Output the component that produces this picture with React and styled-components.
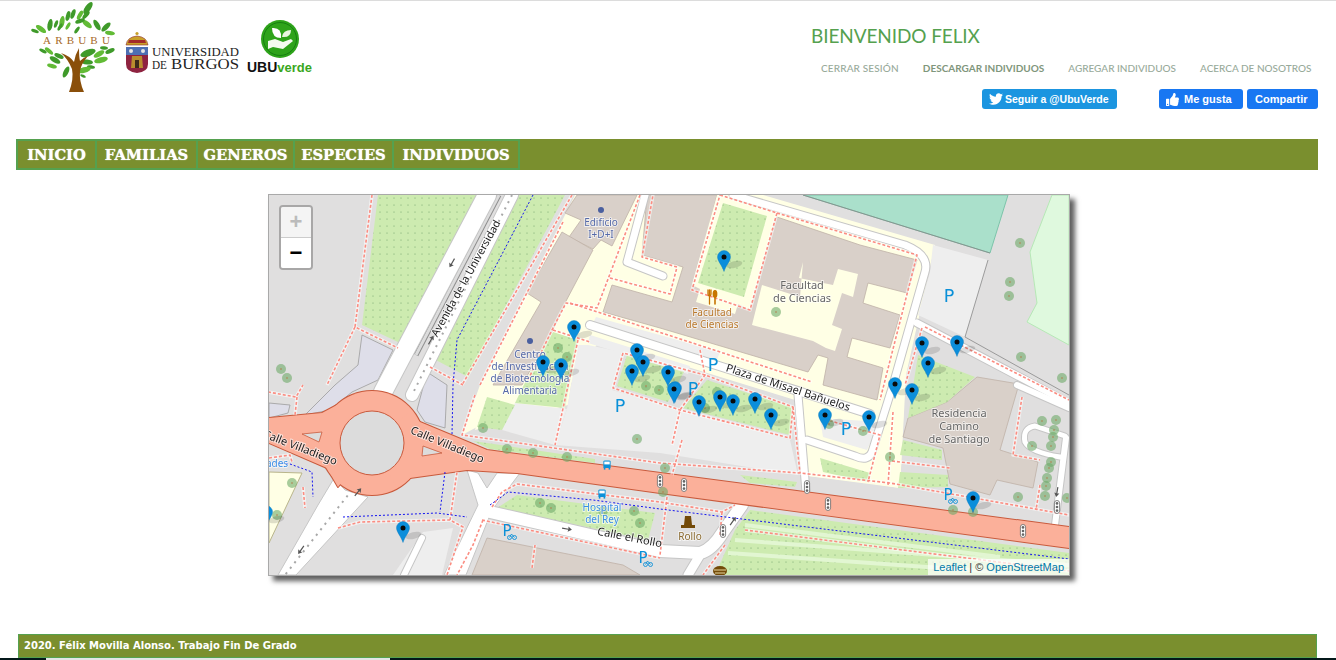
import React from "react";
import styled, { createGlobalStyle } from "styled-components";
import { FaTwitter, FaThumbsUp } from "react-icons/fa";

const OLIVE = "#7a8f2e";
const GREEN = "#55a14f";

const GlobalStyle = createGlobalStyle`
  html, body {
    margin: 0;
    padding: 0;
    height: 660px;
    overflow: hidden;
    background: #fff;
  }
`;

const Page = styled.div`
  height: 660px;
  display: flex;
  flex-direction: column;
  border-top: 1px solid #dcdcdc;
  box-sizing: border-box;
  overflow: hidden;
`;

const Header = styled.header`
  height: 138px;
  flex: none;
  display: flex;
  justify-content: space-between;
  padding-right: 18px;
`;

const Logos = styled.div`
  display: flex;
  align-items: flex-start;
  padding-left: 30px;
`;

const LogoSlot = styled.div`
  margin-top: ${(p) => p.$top || 0}px;
  margin-left: ${(p) => p.$left || 0}px;
  svg {
    display: block;
  }
`;

const HeaderRight = styled.div`
  width: 507px;
  display: flex;
  flex-direction: column;
`;

const Welcome = styled.h1`
  margin: 23px 0 0;
  font: 400 19px/24px "Lato", "Open Sans", sans-serif;
  color: ${GREEN};
  letter-spacing: -0.1px;
`;

const TopLinks = styled.nav`
  display: flex;
  gap: 24px;
  margin: 13px 0 0 10px;
`;

const TopLink = styled.a`
  font: 400 10px/14px "Lato", "Open Sans", sans-serif;
  color: ${(p) => (p.$strong ? "#7f967c" : "#98aa9a")};
  font-weight: ${(p) => (p.$strong ? 700 : 500)};
  letter-spacing: ${(p) => (p.$wide ? 0.15 : 0)}px;
  text-transform: uppercase;
  white-space: nowrap;
`;

const Social = styled.div`
  display: flex;
  margin: 14px 0 0 171px;
`;

const SocialButton = styled.a`
  width: ${(p) => p.$w}px;
  height: 20px;
  display: flex;
  align-items: center;
  gap: ${(p) => p.$iconGap || 5}px;
  box-sizing: border-box;
  padding-left: ${(p) => p.$pad || 7}px;
  margin-left: ${(p) => p.$gap || 0}px;
  border-radius: 3px;
  background: ${(p) => p.$bg};
  color: #fff;
  font: 700 ${(p) => p.$size || 11}px/20px "Liberation Sans", Arial, sans-serif;
  white-space: nowrap;
`;

const Nav = styled.nav`
  margin: 0 18px 0 16px;
  height: 31px;
  flex: none;
  display: flex;
  background: ${OLIVE};
`;

const NavItem = styled.a`
  display: flex;
  align-items: center;
  justify-content: center;
  width: ${(p) => p.$w}px;
  box-sizing: border-box;
  border: 2px solid ${GREEN};
  padding-top: 2px;
  font: 700 14.7px/1 "DejaVu Serif", "Liberation Serif", serif;
  color: #fff;
  text-shadow: 0 0 1px #fff;
  & + & {
    margin-left: -2px;
  }
`;

const MapRow = styled.main`
  margin: 24px 0 0 268px;
  flex: none;
`;

const MapBox = styled.div`
  position: relative;
  width: 800px;
  height: 380px;
  border: 1px solid #a9a9a9;
  box-shadow: 5px 5px 5px #5f5f5f;
  background: #e0dfdf;
  overflow: hidden;
`;

const MapSvg = styled.svg`
  display: block;
  width: 800px;
  height: 380px;
  filter: blur(0.3px);
`;

const Zoom = styled.div`
  position: absolute;
  top: 10px;
  left: 10px;
  display: flex;
  flex-direction: column;
  border: 2px solid rgba(0, 0, 0, 0.25);
  border-radius: 4px;
  background-clip: padding-box;
  overflow: hidden;
`;

const ZoomButton = styled.a`
  width: 30px;
  height: 30px;
  display: flex;
  align-items: center;
  justify-content: center;
  font: 700 22px/30px "Liberation Sans", sans-serif;
  background: ${(p) => (p.$disabled ? "#f4f4f4" : "#fff")};
  color: ${(p) => (p.$disabled ? "#bbb" : "#000")};
  border-bottom: ${(p) => (p.$disabled ? "1px solid #ccc" : "none")};
`;

const Attribution = styled.div`
  position: absolute;
  right: 0;
  bottom: 0;
  padding: 0 5px;
  font: 400 11px/16px "Liberation Sans", Arial, sans-serif;
  background: rgba(255, 255, 255, 0.7);
  color: #333;
  span {
    color: #0078a8;
  }
`;

const Footer = styled.footer`
  margin: 58px 19px 0 18px;
  height: 24px;
  flex: none;
  box-sizing: border-box;
  border: 1px solid ${GREEN};
  background: ${OLIVE};
  padding-left: 5px;
  color: #fff;
  font: 700 10px/22px "DejaVu Sans", Verdana, sans-serif;
`;

const BottomStrip = styled.div`
  height: 2px;
  flex: none;
  background: #04181a;
  padding-left: 46px;
  &::after {
    content: "";
    display: block;
    width: 344px;
    height: 2px;
    background: #e4e4e4;
  }
`;

const MapText = styled.text`
  font-family: "Noto Sans", "DejaVu Sans", sans-serif;
  font-size: ${(p) => p.$size || 10}px;
  fill: ${(p) => p.$color || "#333"};
  text-anchor: middle;
  paint-order: stroke;
  stroke: rgba(255, 255, 255, 0.65);
  stroke-width: 1.8px;
`;

const ParkingText = styled.text`
  font-family: "DejaVu Sans", sans-serif;
  font-size: ${(p) => p.$size || 17.5}px;
  fill: #0a90d8;
  text-anchor: middle;
`;

/* ---- map data, all in page coordinates ---- */

const cream = [
  "575,195 763,195 935,245 906,375 900,488 868,483 800,475 795,400 600,340 570,385 487,397 477,427 462,435 480,385",
  "488,385 578,340 568,405 475,430",
  "800,400 905,380 900,488 800,475",
];

const parks = [
  "378,195 477,195 400,343 362,325",
  "517,195 565,195 468,377 432,358",
  "723,203 767,216 744,297 698,283",
  "627,355 617,386 668,402 684,372 648,362",
  "707,380 792,407 790,435 683,408",
  "553,332 578,340 565,408 515,403 540,352",
  "487,397 515,405 502,430 477,427",
  "473,441 595,459 595,463 490,449",
  "918,355 975,377 947,402 908,418",
  "903,440 942,450 942,460 900,455",
  "900,472 948,475 948,487 898,488",
  "820,458 870,473 868,482 823,472",
  "740,475 797,482 795,487 750,483",
  "517,495 655,513 648,540 497,508",
  "750,510 1069,553 1069,575 715,575 735,530",
];

const parking = [
  "588,345 622,352 612,390 790,440 798,475 660,453 555,445 567,409 578,345",
  "515,403 567,409 555,445 502,430",
  "820,418 880,422 867,450 823,437",
  "933,245 988,260 965,337 918,315 930,272",
  "423,532 453,528 442,575 393,575",
  "596,317 720,352 716,362 592,325",
  "590,335 690,366 688,374 588,343",
];

const lavender = [
  "362,335 393,350 378,380 352,392 330,410 305,415 335,385 358,365",
  "427,372 447,385 445,428 425,422 417,410",
  "269,403 290,405 288,413 269,418",
  "515,565 570,575 505,575",
];

const buildings = [
  "577,195 637,195 612,246 601,240 593,249 569,237 581,220 565,213",
  "562,232 593,250 565,303 552,332 522,385 493,385 541,302 527,293",
  "647,195 717,195 694,285 777,217 860,245 917,260 907,293 868,283 863,303 900,315 890,348 852,338 847,357 883,368 877,400 823,385 828,358 818,355 808,372 660,328 603,312 612,285 672,302 683,267 642,255",
  "977,377 1019,384 1000,450 1038,462 1033,488 997,480 990,495 950,484 943,448 903,437 908,418 947,402",
  "487,538 623,565 640,575 472,575",
];

const creamOver = [
  "717,195 777,213 750,310 738,304 735,314 696,302 700,289 692,285",
  "803,262 799,278 833,285 838,269 858,274 853,297 842,293 832,325 842,329 835,351 826,348 813,341 752,325 762,285 800,297",
];

const roads = [
  { d: "M487,195 L383,392", w: 18 },
  { d: "M512,195 L412,395", w: 12 },
  { d: "M733,195 L905,245 Q930,255 925,272 L893,385 L872,452 Q868,462 855,456 L807,440", w: 7 },
  { d: "M590,325 L870,414", w: 8 },
  { d: "M798,395 L806,492", w: 7 },
  { d: "M645,195 L627,262 L663,276", w: 7 },
  { d: "M917,323 L1069,403", w: 7 },
  { d: "M1017,385 L1069,408", w: 6 },
  { d: "M1066,438 L1055,525", w: 6 },
  { d: "M1065,436 L1035,426 Q1022,428 1025,442 Q1030,452 1060,457", w: 5 },
  { d: "M490,512 L660,551 L700,553 Q712,550 723,532 L742,505", w: 12 },
  { d: "M700,555 L688,575", w: 9 },
  { d: "M422,538 L404,575", w: 6 },
];

const dottedRoads = [
  "M512,195 L412,395",
  "M352,490 L285,575",
];

const whiteShapes = [
  "325,468 345,490 368,497 296,575 278,575 318,505 333,480",
  "467,470 478,473 487,488 497,473 520,473 492,510 466,575 444,575 478,505",
];

const salmonShapes = [
  "269,418 322,413 337,405 372,443 338,487 327,468 269,443",
  "410,412 420,422 487,450 1069,527 1069,548 660,493 517,473 467,470 410,478 397,488 372,443",
];

const islands = [
  "302,434 322,432 319,442",
  "423,446 442,453 422,456",
];

const footways = [
  "M372,195 L355,327 L398,348",
  "M355,327 L327,385",
  "M572,195 L462,385",
  "M430,367 L463,385",
  "M640,195 L597,308 L566,303 L552,330 L527,382",
  "M610,278 L670,294 L677,267 L642,257 L653,195",
  "M570,303 L812,382",
  "M623,353 L613,388 L680,410 L790,438 L793,407 L705,375 L623,353",
  "M700,350 L705,375 L680,410 L672,445",
  "M553,330 L590,342",
  "M578,340 L555,445",
  "M475,395 L462,435 L660,463 L800,473 L890,483 L1069,515",
  "M268,392 L296,397 L303,385",
  "M297,397 L295,415",
  "M338,528 L360,522 L450,520 L463,527 L447,575",
  "M450,520 L457,472",
  "M303,487 L305,508",
  "M269,458 L290,455 L292,462",
  "M492,507 L502,492 L517,484 L660,502 L722,512 L735,505",
  "M483,520 L473,545 L457,575",
  "M535,545 L532,568",
  "M482,520 L660,558",
  "M682,440 L672,475",
  "M667,497 L660,555",
  "M722,512 L720,535",
  "M745,530 L1069,571",
  "M725,545 L703,575",
  "M777,213 L917,255 L880,400",
  "M720,195 L777,213 L750,310 L692,290 L720,195",
  "M922,328 L905,385",
  "M893,412 L888,485",
  "M925,327 L1069,400",
  "M892,461 L950,468",
  "M1040,485 L1036,510",
  "M1022,397 L1013,455 L1040,460",
  "M820,418 L880,435 L868,482",
  "M793,407 L800,473",
  "M563,222 L480,385",
];

const bluePaths = [
  "M533,195 L457,340 L453,385 L452,435",
  "M445,472 L440,512",
  "M343,517 L437,513 L467,517",
  "M278,463 L290,464 L312,472 L313,497",
  "M490,505 L508,492 L593,500 L660,509 L1069,559",
];

const parkStripes = [
  "M745,525 L1000,557",
  "M735,540 L1069,565",
  "M728,553 L1040,575",
];

const trees = [
  [281, 369], [287, 378], [558, 348], [567, 357], [292, 483], [277, 515], [483, 428], [507, 449],
  [533, 453], [567, 457], [637, 439], [540, 503], [551, 508], [634, 511], [640, 523], [603, 511],
  [1020, 243], [1010, 282], [1009, 296], [1021, 357], [1062, 378], [776, 312], [665, 468], [663, 492],
  [829, 424], [863, 431], [890, 457], [953, 510], [973, 512], [1018, 497], [1042, 421], [1056, 420],
  [1054, 430], [1053, 437], [1032, 446], [1051, 446], [1051, 462], [1049, 468], [1047, 478], [1046, 486],
  [1045, 496], [1067, 498], [646, 386], [659, 390], [705, 408], [717, 392],
];

const markers = [
  [724, 257], [574, 327], [637, 350], [643, 362], [632, 371], [668, 372], [675, 388], [674, 389],
  [699, 402], [720, 397], [733, 401], [755, 399], [771, 415], [825, 415], [869, 417], [543, 362],
  [561, 365], [957, 342], [922, 343], [928, 363], [895, 384], [912, 390], [973, 498], [403, 528],
  [266, 512],
];

const signals = [
  [660, 481], [684, 485], [807, 487], [828, 504], [1023, 531], [1057, 507], [723, 531],
];

const arrows = [
  [452, 263, 210],
  [431, 340, 30],
  [358, 492, 40],
  [301, 550, 215],
  [567, 529, 100],
  [733, 521, 35],
  [1057, 492, 190],
];

const parkingSigns = [
  [620, 412], [713, 371], [693, 395], [846, 435], [949, 302],
];

const cycleParking = [
  [507, 536], [643, 563], [948, 500],
];

const buses = [
  [607, 465], [602, 494],
];

const labels = [
  { t: "Edificio", x: 601, y: 226, c: "#566aa8" },
  { t: "I+D+I", x: 601, y: 238, c: "#566aa8" },
  { t: "Centro", x: 530, y: 358, c: "#566aa8" },
  { t: "de Investigación", x: 530, y: 370, c: "#566aa8" },
  { t: "de Biotecnología", x: 530, y: 382, c: "#566aa8" },
  { t: "Alimentaria", x: 530, y: 394, c: "#566aa8" },
  { t: "Facultad", x: 712, y: 316, c: "#b9782c" },
  { t: "de Ciencias", x: 712, y: 328, c: "#b9782c" },
  { t: "Facultad", x: 802, y: 289, c: "#666", s: 11 },
  { t: "de Ciencias", x: 802, y: 302, c: "#666", s: 11 },
  { t: "Residencia", x: 959, y: 417, c: "#666", s: 11 },
  { t: "Camino", x: 959, y: 430, c: "#666", s: 11 },
  { t: "de Santiago", x: 959, y: 443, c: "#666", s: 11 },
  { t: "Hospital", x: 602, y: 511, c: "#3b8fe6" },
  { t: "del Rey", x: 602, y: 523, c: "#3b8fe6" },
  { t: "Rollo", x: 690, y: 540, c: "#8a6a30" },
  { t: "ades", x: 277, y: 467, c: "#3b8fe6" },
];

const roadNames = [
  { t: "Avenida de la Universidad", x: 469, y: 280, a: -61, s: 10.8 },
  { t: "Calle Villadiego", x: 299, y: 451, a: 21, s: 11 },
  { t: "Calle Villadiego", x: 446, y: 448, a: 22.5, s: 11 },
  { t: "Calle el Rollo", x: 629, y: 541, a: 11, s: 11 },
  { t: "Plaza de Misael Bañuelos", x: 787, y: 391, a: 18, s: 11 },
];

/* ---- drawings ---- */

function Marker({ x, y }) {
  return (
    <g transform={`translate(${x} ${y})`}>
      <ellipse cx="10.5" cy="7.5" rx="8" ry="3.4" fill="rgba(0,0,0,0.13)" transform="rotate(-14 10.5 7.5)" />
      <path
        d="M0,14.5 C-1.6,9 -6.5,4 -6.5,0 A6.5,6.5 0 1 1 6.5,0 C6.5,4 1.6,9 0,14.5 Z"
        fill="#0b8edb"
        stroke="#0a78bb"
        strokeWidth="0.4"
      />
      <circle r="2.5" fill="#0a0a0a" />
    </g>
  );
}

function Tree({ x, y }) {
  return (
    <g>
      <circle cx={x} cy={y} r="5" fill="rgba(110,170,105,0.6)" />
      <circle cx={x} cy={y} r="0.8" fill="#b5794a" />
    </g>
  );
}

function Signal({ x, y }) {
  return (
    <g transform={`translate(${x} ${y})`}>
      <rect x="-2.6" y="-6.5" width="5.2" height="13" rx="2.6" fill="#fff" stroke="#666" strokeWidth="0.8" />
      <circle cy="-3.6" r="1.3" fill="#666" />
      <circle r="1.3" fill="#666" />
      <circle cy="3.6" r="1.3" fill="#666" />
    </g>
  );
}

function RoadArrow({ x, y, a }) {
  return (
    <path
      d="M0,-5 L2.6,-1 L0.6,-1.4 L0.6,5 L-0.6,5 L-0.6,-1.4 L-2.6,-1 Z"
      fill="#555"
      transform={`translate(${x} ${y}) rotate(${a})`}
    />
  );
}

function Bus({ x, y }) {
  return (
    <g transform={`translate(${x} ${y})`} fill="#0a90d8">
      <path d="M-3.6,-3.4 Q-3.6,-4.6 -2,-4.6 L2,-4.6 Q3.6,-4.6 3.6,-3.4 L3.6,3 L-3.6,3 Z" />
      <rect x="-2.7" y="-3.4" width="5.4" height="2.8" fill="#fff" />
      <rect x="-3.2" y="3" width="1.6" height="1.6" />
      <rect x="1.6" y="3" width="1.6" height="1.6" />
    </g>
  );
}

function CycleParking({ x, y }) {
  return (
    <g>
      <ParkingText x={x} y={y} $size={15}>P</ParkingText>
      <g fill="none" stroke="#0a90d8" strokeWidth="0.9">
        <circle cx={x + 2.5} cy={y + 1.5} r="2" />
        <circle cx={x + 7.5} cy={y + 1.5} r="2" />
        <path d={`M${x + 2.5},${y + 1.5} L${x + 4.5},${y - 2} L${x + 7.5},${y + 1.5}`} />
      </g>
    </g>
  );
}

function MapDrawing() {
  return (
    <MapSvg viewBox="269 195 800 380">
      <defs>
        <pattern id="parkDots" width="7" height="7" patternUnits="userSpaceOnUse">
          <rect width="7" height="7" fill="#cdebb0" />
          <circle cx="2" cy="2" r="0.55" fill="#6f9f6a" />
        </pattern>
      </defs>

      <rect x="269" y="195" width="800" height="380" fill="#e0dfdf" />

      <polygon points="803,195 1008,195 990,253" fill="#aae0cb" stroke="#7cc4aa" />
      <polygon points="1052,195 1069,195 1069,345 1027,322 1037,303 1030,252" fill="#dff9de" stroke="#b6e8b6" />
      <polygon points="269,472 302,473 269,543" fill="#ffffe5" stroke="#b9b58a" />

      {cream.map((p, i) => <polygon key={i} points={p} fill="#ffffe5" />)}
      {parking.map((p, i) => <polygon key={i} points={p} fill="#eeeeee" />)}
      {lavender.map((p, i) => <polygon key={i} points={p} fill="#dedee9" stroke="#9c9c9c" strokeWidth="0.8" />)}
      {buildings.map((p, i) => <polygon key={i} points={p} fill="#d9d0c9" stroke="#bfb1a7" strokeWidth="0.8" />)}
      {creamOver.map((p, i) => <polygon key={i} points={p} fill="#ffffe5" />)}
      {parks.map((p, i) => <polygon key={i} points={p} fill="url(#parkDots)" />)}

      <g fill="none" stroke="#e2f6d2" strokeWidth="4">
        {parkStripes.map((d) => <path key={d} d={d} />)}
      </g>
      <path d="M965,337 L1069,395" fill="none" stroke="#888" strokeWidth="0.8" />
      <path d="M988,260 L965,337" fill="none" stroke="#888" strokeWidth="0.8" />
      <path d="M803,195 L990,253" fill="none" stroke="#888" strokeWidth="0.8" />

      <path d="M499,195 L416,355" fill="none" stroke="#8e8e8e" strokeWidth="5" />
      <path d="M499,195 L416,355" fill="none" stroke="#dcdcdc" strokeWidth="3" />

      <g fill="none" strokeLinecap="round" strokeLinejoin="round">
        {roads.map((r) => <path key={r.d} d={r.d} stroke="#c6c6c6" strokeWidth={r.w + 2} />)}
      </g>
      {whiteShapes.map((p) => <polygon key={p} points={p} fill="#fff" stroke="#c6c6c6" strokeWidth="1" />)}
      <g fill="none" strokeLinecap="round" strokeLinejoin="round">
        {roads.map((r) => <path key={r.d} d={r.d} stroke="#fff" strokeWidth={r.w} />)}
      </g>
      {dottedRoads.map((d) => (
        <path key={d} d={d} fill="none" stroke="#a8a8a8" strokeWidth="2" strokeDasharray="2 5" />
      ))}

      <g stroke="#c95a3c" strokeWidth="2" strokeLinejoin="round">
        <circle cx="372" cy="443" r="52" fill="#c95a3c" />
        {salmonShapes.map((p) => <polygon key={p} points={p} fill="#c95a3c" />)}
      </g>
      <circle cx="372" cy="443" r="52" fill="#fbb09a" />
      {salmonShapes.map((p) => <polygon key={p} points={p} fill="#fbb09a" />)}
      <circle cx="372" cy="443" r="32" fill="#dcdcdc" stroke="#c95a3c" />
      {islands.map((p) => <polygon key={p} points={p} fill="#dcdcdc" stroke="#c95a3c" strokeWidth="0.8" />)}

      <g fill="none" strokeLinejoin="round">
        {footways.map((d) => <path key={d} d={d} stroke="rgba(255,255,255,0.6)" strokeWidth="3.4" />)}
        {footways.map((d) => <path key={d} d={d} stroke="#fb8d82" strokeWidth="1.6" strokeDasharray="3 2" />)}
        {bluePaths.map((d) => <path key={d} d={d} stroke="#1414f0" strokeWidth="1" strokeDasharray="2 2" />)}
      </g>

      {trees.map(([x, y]) => <Tree key={`${x}-${y}`} x={x} y={y} />)}
      {signals.map(([x, y]) => <Signal key={`${x}-${y}`} x={x} y={y} />)}
      {arrows.map(([x, y, a]) => <RoadArrow key={`${x}-${y}`} x={x} y={y} a={a} />)}
      {buses.map(([x, y]) => <Bus key={`${x}-${y}`} x={x} y={y} />)}

      <circle cx="601" cy="210" r="3" fill="#4a5f9f" />
      <circle cx="530" cy="341" r="3" fill="#4a5f9f" />

      {/* restaurant and monument icons */}
      <g fill="none" stroke="#c77400" strokeWidth="1.3" strokeLinecap="round">
        <path d="M708,290 L708,294 Q708,296 709.5,296 Q711,296 711,294 L711,290 M709.5,290 L709.5,304" />
        <path d="M715,291 L715,304" strokeWidth="1.6" />
      </g>
      <ellipse cx="715" cy="294" rx="2.4" ry="4" fill="#c77400" />
      <path d="M685,516 L691,516 L692,525 L695,525 L695,528 L681,528 L681,525 L684,525 Z" fill="#734a08" />
      <ellipse cx="720" cy="571" rx="7" ry="5" fill="#734a08" />
      <path d="M714,570 L726,570 M715,573 L725,573" stroke="#e8d8a0" strokeWidth="1" />

      {labels.map((l) => (
        <MapText key={`${l.t}-${l.x}`} x={l.x} y={l.y} $color={l.c} $size={l.s}>{l.t}</MapText>
      ))}
      {roadNames.map((r) => (
        <MapText key={`${r.t}-${r.x}`} x={r.x} y={r.y} $size={r.s} $color="#1c1c1c" transform={`rotate(${r.a} ${r.x} ${r.y})`}>
          {r.t}
        </MapText>
      ))}

      {parkingSigns.map(([x, y]) => <ParkingText key={`${x}-${y}`} x={x} y={y}>P</ParkingText>)}
      {cycleParking.map(([x, y]) => <CycleParking key={`${x}-${y}`} x={x} y={y} />)}

      {markers.map(([x, y]) => <Marker key={`${x}-${y}`} x={x} y={y} />)}
    </MapSvg>
  );
}

const leaves = [
  [88, 7, -55, 7], [80, 14, -60, 5], [73, 13, -70, 5], [68, 15, -75, 5], [62, 21, -80, 6], [56, 23, -70, 4],
  [50, 24, -80, 6], [41, 28, 35, 6], [35, 30, 20, 4], [60, 26, -60, 4], [68, 25, -60, 4], [77, 29, -55, 4],
  [86, 14, -50, 5], [87, 23, 40, 6], [97, 24, 60, 6], [106, 26, -45, 6], [110, 32, 10, 5], [80, 20, -20, 5],
  [43, 50, 25, 4], [49, 50, 40, 5], [59, 55, 25, 5], [55, 59, 30, 6], [52, 65, 15, 5], [66, 71, -65, 6],
  [88, 52, -20, 8], [99, 53, -30, 6], [110, 50, -25, 5], [104, 47, 5, 4], [101, 59, -15, 7], [87, 61, 5, 6],
  [91, 66, 10, 4], [84, 69, -15, 7], [83, 75, 25, 3],
];

function TreeLogo() {
  return (
    <svg width="92" height="92" viewBox="30 0 92 92">
      {leaves.map(([x, y, r, l], i) => (
        <ellipse
          key={i}
          cx={x}
          cy={y}
          rx={l}
          ry={l / 2.4}
          fill={i % 3 === 1 ? "#62bb36" : "#3f9a2a"}
          transform={`rotate(${r} ${x} ${y})`}
        />
      ))}
      <path
        d="M69,91 Q74,78 72,68 Q68,58 61,52 Q70,55 74,61 Q75,54 79,47 Q79,56 80,60 Q84,56 88,55 Q81,63 80,70 Q79,80 84,91 Z"
        fill="#8a4f0a"
      />
      <text x="43" y="43" fontFamily="Liberation Serif, serif" fontSize="11" letterSpacing="4.2" fill="#a66a2a">
        ARBUBU
      </text>
    </svg>
  );
}

function UniversityLogo() {
  return (
    <svg width="117" height="50" viewBox="124 28 117 50">
      <path d="M126,45 Q127,37 137,36 Q147,37 148,45 Z" fill="#c9a02a" stroke="#8a2a2a" strokeWidth="0.6" />
      <path d="M128,43 L146,43 L145,40 L129,40 Z" fill="#a32a2a" />
      <circle cx="137" cy="33.5" r="1.6" fill="#c9a02a" />
      <path d="M126,47 L148,47 L148,64 Q148,72 137,73 Q126,72 126,64 Z" fill="#8e2340" />
      <rect x="126" y="47" width="22" height="8" fill="#4d6fb3" />
      <circle cx="131" cy="51" r="2" fill="#e6e6e6" />
      <circle cx="143" cy="51" r="2" fill="#e6e6e6" />
      <path d="M132,56 L142,56 L143,68 L131,68 Z" fill="#b98d2e" />
      <rect x="135" y="60" width="4" height="8" fill="#3d2a1a" />
      <text x="152" y="56" fontFamily="Liberation Serif, serif" fontSize="12" textLength="87" lengthAdjust="spacingAndGlyphs" fill="#222">
        UNIVERSIDAD
      </text>
      <text x="152" y="69" fontFamily="Liberation Serif, serif" fontSize="11.5" textLength="15" lengthAdjust="spacingAndGlyphs" fill="#222">
        DE
      </text>
      <text x="171" y="69" fontFamily="Liberation Serif, serif" fontSize="15.5" textLength="68" lengthAdjust="spacingAndGlyphs" fill="#222">
        BURGOS
      </text>
    </svg>
  );
}

function UbuVerdeLogo() {
  return (
    <svg width="70" height="58" viewBox="245 18 70 58">
      <circle cx="280" cy="39" r="19" fill="#2ea31a" />
      <circle cx="280" cy="39" r="16.5" fill="none" stroke="#158010" strokeWidth="1" />
      <path d="M272,28 Q282,27 281,38 Q272,38 272,28 Z" fill="#fff" />
      <path d="M282,37 Q283,30 291,30 Q291,38 282,37 Z" fill="#e8f5e0" />
      <path d="M268,41 L275,39 L283,42 L291,39 L293,41 L283,49 L273,47 L268,49 Z" fill="#f4fbef" />
      <text x="247" y="72" fontFamily="Liberation Sans, sans-serif" fontWeight="700" fontSize="14">
        <tspan fill="#111">UBU</tspan>
        <tspan fill="#3aa71d" fontSize="13">verde</tspan>
      </text>
    </svg>
  );
}

export default function App() {
  return (
    <>
      <GlobalStyle />
      <Page>
        <Header>
          <Logos>
            <LogoSlot>
              <TreeLogo />
            </LogoSlot>
            <LogoSlot $top={27} $left={2}>
              <UniversityLogo />
            </LogoSlot>
            <LogoSlot $top={17} $left={4}>
              <UbuVerdeLogo />
            </LogoSlot>
          </Logos>
          <HeaderRight>
            <Welcome>BIENVENIDO FELIX</Welcome>
            <TopLinks>
              <TopLink $wide>Cerrar sesión</TopLink>
              <TopLink $strong>Descargar individuos</TopLink>
              <TopLink>Agregar individuos</TopLink>
              <TopLink>Acerca de nosotros</TopLink>
            </TopLinks>
            <Social>
              <SocialButton $bg="#1b95e0" $w={135} $iconGap={2} $size={10.5}>
                <FaTwitter size={14} />
                Seguir a @UbuVerde
              </SocialButton>
              <SocialButton $bg="#1877f2" $gap={42} $w={84}>
                <FaThumbsUp size={13} />
                Me gusta
              </SocialButton>
              <SocialButton $bg="#1877f2" $gap={4} $w={71} $pad={8}>
                Compartir
              </SocialButton>
            </Social>
          </HeaderRight>
        </Header>

        <Nav>
          <NavItem $w={81}>INICIO</NavItem>
          <NavItem $w={103}>FAMILIAS</NavItem>
          <NavItem $w={99}>GENEROS</NavItem>
          <NavItem $w={101}>ESPECIES</NavItem>
          <NavItem $w={128}>INDIVIDUOS</NavItem>
        </Nav>

        <MapRow>
          <MapBox>
            <MapDrawing />
            <Zoom>
              <ZoomButton $disabled>+</ZoomButton>
              <ZoomButton>−</ZoomButton>
            </Zoom>
            <Attribution>
              <span>Leaflet</span> | © <span>OpenStreetMap</span>
            </Attribution>
          </MapBox>
        </MapRow>

        <Footer>2020. Félix Movilla Alonso. Trabajo Fin De Grado</Footer>
        <BottomStrip />
      </Page>
    </>
  );
}
